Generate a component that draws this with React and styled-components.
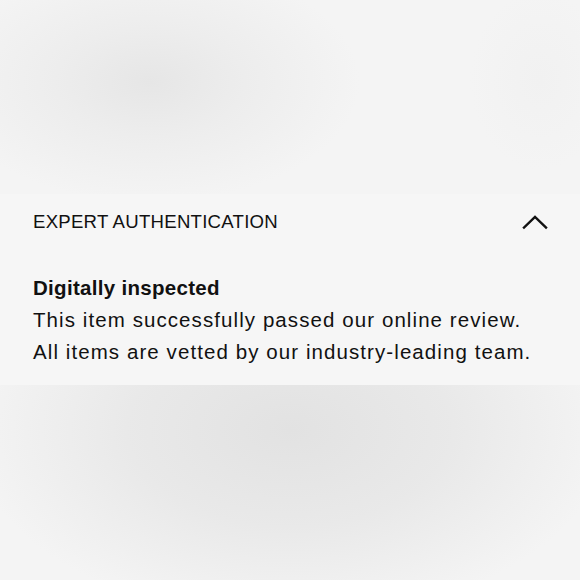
import styled, { createGlobalStyle } from 'styled-components';

const GlobalStyle = createGlobalStyle`
  html, body {
    margin: 0;
    padding: 0;
  }
  body {
    font-family: "Liberation Sans", Arial, sans-serif;
    color: #111;
  }
`;

const Page = styled.div`
  width: 580px;
  height: 580px;
  display: grid;
  grid-template-rows: 194px auto 1fr;
  background-color: #f4f4f4;
  background-image:
    radial-gradient(ellipse 210px 120px at 150px 82px, #e6e6e6 0%, rgba(234, 234, 234, 0.7) 45%, rgba(244, 244, 244, 0) 100%),
    radial-gradient(ellipse 70px 90px at 540px 80px, #f1f1f1 0%, rgba(244, 244, 244, 0) 100%),
    radial-gradient(ellipse 320px 190px at 290px 430px, #e2e2e2 0%, rgba(229, 229, 229, 0.75) 50%, rgba(244, 244, 244, 0) 100%);
  overflow: hidden;
`;

const Panel = styled.section`
  grid-row: 2;
  background: #f6f6f6;
  padding: 0 33px 17px;
`;

const Header = styled.div`
  height: 56px;
  display: flex;
  align-items: center;
  justify-content: space-between;
`;

const Title = styled.h2`
  margin: 0;
  font-size: 18.6px;
  font-weight: 400;
  letter-spacing: 0.25px;
  color: #111;
`;

const Toggle = styled.button`
  border: 0;
  background: none;
  padding: 0;
  margin-right: -1px;
  display: flex;
  color: #111;
`;

const Body = styled.div`
  padding-top: 22px;
  font-size: 20.5px;
  line-height: 32px;
`;

const Lead = styled.p`
  margin: 0;
  font-weight: 700;
  letter-spacing: 0.3px;
`;

const Line = styled.p`
  margin: 0;
  letter-spacing: 1.08px;
`;

export default function App() {
  return (
    <>
      <GlobalStyle />
      <Page>
        <Panel>
          <Header>
            <Title>EXPERT AUTHENTICATION</Title>
            <Toggle aria-label="Collapse">
              <svg width="26" height="16" viewBox="0 0 26 16" fill="none">
                <path d="M2 13.5 L13 3 L24 13.5" stroke="currentColor" strokeWidth="2.4" strokeLinecap="square" />
              </svg>
            </Toggle>
          </Header>
          <Body>
            <Lead>Digitally inspected</Lead>
            <Line>This item successfully passed our online review.</Line>
            <Line>All items are vetted by our industry-leading team.</Line>
          </Body>
        </Panel>
      </Page>
    </>
  );
}
